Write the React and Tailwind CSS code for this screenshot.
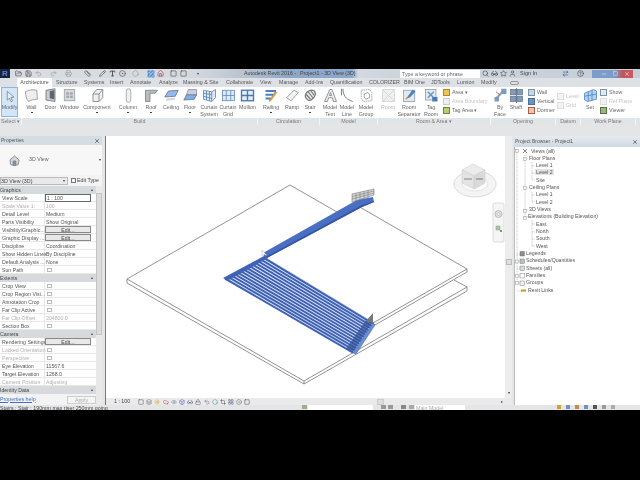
import { FolderOpen, Save, Undo2, Redo2, Printer, Ruler, Pencil, Type, CircleDot, Hexagon, LayoutGrid, Home, Square, Layers, Sun, Cloud, Eye, Glasses, Lock, Crop, Box, Search, Star, User, HelpCircle, X, ArrowRightLeft, Minus } from "lucide-react";

const tabs = [
  ["Structure", "w-[28px]"], ["Systems", "w-[26px]"], ["Insert", "w-[20px]"], ["Annotate", "w-[29px]"], ["Analyze", "w-[24px]"],
  ["Massing & Site", "w-[43px]"], ["Collaborate", "w-[34px]"], ["View", "w-[19px]"], ["Manage", "w-[26px]"], ["Add-Ins", "w-[25px]"],
  ["Quantification", "w-[39px]"], ["COLORIZER", "w-[35px]"], ["BIM One", "w-[27px]"], ["JDTools", "w-[26px]"], ["Lumion", "w-[24px]"], ["Modify", "w-[29px]"],
];

const Ic = ({ children }) => <svg viewBox="0 0 20 20" className="h-[15px] w-[15px]">{children}</svg>;

const icons = {
  modify: <path d="M7 3 L7 15 L10 12 L12 17 L14 16 L12 11 L16 11 Z" fill="#e8eef6" stroke="#6f7c8c" />,
  wall: <path d="M2 5 C7 2 12 2 17 3 L18 15 C13 15 9 16 6 18 C3 14 2 10 2 5Z" fill="#eeeeee" stroke="#888" />,
  door: <g><path d="M4 3 L16 1 L16 18 L4 16Z" fill="#c9ccd0" stroke="#666" /><path d="M9 4 L15 3 L15 15 L9 14Z" fill="#5c6775" /></g>,
  window: <g><rect x="3" y="2" width="14" height="15" fill="#d6d9dd" stroke="#999" /><path d="M5 5H15V14H5Z M10 5V14 M5 9.5H15" fill="#a0a9b4" stroke="#dfe3e8" /></g>,
  component: <path d="M4 8 L9 2 L17 2 L17 13 L12 18 L4 18Z M4 8 L12 8 L12 18 M12 8 L17 2" fill="#f0f0f0" stroke="#777" />,
  column: <rect x="7" y="1" width="6" height="18" rx="3" fill="#f0f0f0" stroke="#999" />,
  roof: <path d="M2 3 L18 3 L15 7 L8 7 L8 18 L2 18Z" fill="#b8bcc0" stroke="#777" />,
  ceiling: <g><path d="M6 4 L19 3 L15 11 L1 12Z" fill="#8fbcea" stroke="#668" /><path d="M3 14 L15 13 L14 16 L2 17Z" fill="#d2d6da" /></g>,
  floor: <g><path d="M7 2 H18 V10 L4 11Z" fill="#c9d0d8" stroke="#889" /><path d="M5 9 L18 9 L15 15 L1 16Z" fill="#7db0e6" stroke="#668" /></g>,
  system: <g fill="none" stroke="#4f7bb2"><path d="M2 3 L13 5 L18 2 V13 L13 18 L2 15Z" fill="#dfeaf6" /><path d="M13 5 V18 M6 4 V16 M10 4.5 V17 M2 7 L13 9 M2 11 L13 14" /></g>,
  grid: <g fill="#dde9f5" stroke="#5a84b8"><rect x="2" y="3" width="16" height="14" /><path d="M7 3V17 M13 3V17 M2 10H18" /></g>,
  mullion: <g fill="#e4ecf5" stroke="#4a78ad" strokeWidth="1.8"><rect x="2" y="3" width="16" height="14" /><path d="M10 3V17 M2 10H18" /></g>,
  railing: <g><path d="M2 4H16 M2 9H13 M2 14H9" stroke="#4a7fc4" strokeWidth="2.5" /><path d="M17 6 L9 17 L7 18 L7.5 15.5 L15 5Z" fill="#e0a526" stroke="#8a6414" strokeWidth=".5" /></g>,
  ramp: <path d="M2 13 L12 3 L18 6 L8 17Z" fill="#f2f2f2" stroke="#888" />,
  stair: <g fill="none" stroke="#777" strokeWidth="1.6"><path d="M3 11 C3 5 11 1 15 4 C18 7 16 12 12 15 C9 18 5 17 3 11Z" fill="#eee" /><path d="M7 5 L13 13 M10 3 L15 10 M4 8 L10 15" /></g>,
  mtext: <path d="M2 18 L9 2 L12 2 L18 18 L14 18 L12.5 13 L7.5 13 L6 18Z M8.5 10 L11.5 10 L10 6Z" fill="#ecedef" stroke="#777" />,
  mline: <path d="M4 1 C4 9 7 15 17 18 M2 1 V10" fill="none" stroke="#777" strokeWidth="1.2" />,
  mgroup: <g fill="none" stroke="#888"><path d="M3 3 L14 2 L17 6 L17 17 L6 18 L3 14Z" strokeDasharray="2 1" /><path d="M7 8 L12 6 L14 9 L14 13 L9 15 L7 12Z" /></g>,
  room: <g stroke="#d0d0d0" fill="#f0f0f0"><rect x="2" y="2" width="16" height="16" /><path d="M2 2 L18 18 M18 2 L2 18" /></g>,
  sep: <g stroke="#8895a2" fill="#e3e9ef"><rect x="2" y="3" width="15" height="15" /><path d="M5 15 L16 4" stroke="#d88f20" strokeWidth="2" /><path d="M14 2 L18 5 L10 13 L8 13 L8 11Z" fill="#4a86cf" stroke="none" /></g>,
  tag: <g stroke="#8895a2" fill="#e3e9ef"><rect x="2" y="2" width="14" height="14" /><path d="M5 5 L13 13 M13 5 L5 13" stroke="#6a97cb" strokeWidth="2" /><rect x="11" y="12" width="7" height="6" fill="#4a78b6" stroke="none" /></g>,
  face: <g><path d="M3 15 L15 3" stroke="#98a4b2" strokeWidth="3" /><rect x="11" y="1" width="7" height="7" fill="#7c9cc4" /><rect x="2" y="12" width="6" height="6" fill="#7c9cc4" /><path d="M4 5 L9 9" stroke="#c34" strokeWidth="1" /></g>,
  shaft: <g fill="#7c9cc4" stroke="#667788"><rect x="2" y="2" width="7" height="7" /><rect x="11" y="2" width="7" height="7" /><rect x="2" y="11" width="7" height="7" /><rect x="11" y="11" width="7" height="7" /><path d="M10 0V20" stroke="#555" /></g>,
  set: <g fill="#b4d3f2" stroke="#4a7fc4"><path d="M2 7 L14 2 L18 4 L18 15 L6 18 L2 16Z" /><path d="M7 5 V18 M12 3 V16.5 M2 11 L18 8" fill="none" /></g>,
};

const panels = [
  {
    w: "w-[236px]", label: "Build",
    tools: [
      ["Wall", "wall", "w-[19px]", 1], ["Door", "door", "w-[19px]"], ["Window", "window", "w-[19px]"], ["Component", "component", "w-[36px]", 1],
      ["Column", "column", "w-[26px]", 1], ["Roof", "roof", "w-[20px]", 1], ["Ceiling", "ceiling", "w-[20px]"], ["Floor", "floor", "w-[18px]", 1],
      ["Curtain System", "system", "w-[20px]"], ["Curtain Grid", "grid", "w-[18px]"], ["Mullion", "mullion", "w-[21px]"],
    ],
  },
  { w: "w-[62px]", label: "Circulation", tools: [["Railing", "railing", "w-[26px]", 1], ["Ramp", "ramp", "w-[16px]"], ["Stair", "stair", "w-[20px]", 1]] },
  { w: "w-[58px]", label: "Model", tools: [["Model Text", "mtext", "w-[20px]"], ["Model Line", "mline", "w-[14px]"], ["Model Group", "mgroup", "w-[24px]"]] },
];

const Tool = ({ label, icon, w, dot, dim }) => (
  <div className={`flex shrink-0 flex-col items-center ${w}`}>
    <div className="flex h-[16px] items-center"><Ic>{icons[icon]}</Ic></div>
    <div className={`mt-[1px] text-center text-[5.3px] leading-[7px] ${dim ? "text-[#b5b5b5]" : "text-[#666]"}`}>
      {label.split(" ").map((part) => <div key={part}>{part}</div>)}
    </div>
    {dot ? <div className="mt-[1px] h-[1px] w-[2px] bg-[#444]" /> : null}
  </div>
);

const Mini = ({ color, text, dim }) => (
  <div className={`flex h-[9px] items-center gap-[2px] text-[5.3px] ${dim ? "text-[#c4c4c4]" : "text-[#666]"}`}>
    <span className={`h-[7px] w-[7px] shrink-0 border ${color}`} />
    <span className="whitespace-nowrap">{text}</span>
  </div>
);

const Ribbon = () => (
  <div className="flex h-[38px] shrink-0 flex-col">
    <div className="flex h-[31px] bg-white">
      <div className="flex w-[22px] shrink-0 pl-[1px]">
        <div className="flex h-[30px] w-[17px] flex-col items-center border border-[#8db6e2] bg-[#d3e6f7]">
          <div className="flex h-[16px] items-center"><Ic>{icons.modify}</Ic></div>
          <span className="text-[5.3px] leading-[7px] text-[#5a6a7a]">Modify</span>
        </div>
      </div>
      {panels.map((p) => (
        <div key={p.label} className={`flex shrink-0 ${p.w}`}>
          {p.tools.map(([label, icon, w, dot]) => <Tool key={label} label={label} icon={icon} w={w} dot={dot} />)}
        </div>
      ))}
      <div className="flex w-[113px] shrink-0">
        <Tool label="Room" icon="room" w="w-[20px]" dim />
        <Tool label="Room Separator" icon="sep" w="w-[22px]" />
        <Tool label="Tag Room" icon="tag" w="w-[22px]" />
        <div className="flex w-[49px] flex-col pl-[1px] pt-[1px]">
          <Mini color="border-[#b28a1c] bg-[#eec44f]" text="Area ▾" />
          <Mini color="border-[#ccc] bg-[#eee]" text="Area  Boundary" dim />
          <Mini color="border-[#5b8a3a] bg-[#b5cf6a]" text="Tag  Area  ▾" />
        </div>
      </div>
      <div className="flex w-[65px] shrink-0">
        <Tool label="By Face" icon="face" w="w-[18px]" />
        <Tool label="Shaft" icon="shaft" w="w-[14px]" />
        <div className="flex w-[33px] flex-col pl-[5px] pt-[1px]">
          <Mini color="border-[#7c93ad] bg-[#c7d6e6]" text="Wall" />
          <Mini color="border-[#46709e] bg-[#6d93bd]" text="Vertical" />
          <Mini color="border-[#b65c3c] bg-[#e9c7b5]" text="Dormer" />
        </div>
      </div>
      <div className="flex w-[25px] shrink-0 flex-col pl-[1px] pt-[5px]">
        <Mini color="border-[#ddd] bg-[#f3f3f3]" text="Level" dim />
        <Mini color="border-[#ddd] bg-[#f3f3f3]" text="Grid" dim />
      </div>
      <div className="flex w-[55px] shrink-0">
        <Tool label="Set" icon="set" w="w-[18px]" />
        <div className="flex flex-col pl-[1px] pt-[1px]">
          <Mini color="border-[#7c93ad] bg-[#dfe7ef]" text="Show" />
          <Mini color="border-[#ddd] bg-[#f1f1f1]" text="Ref  Plane" dim />
          <Mini color="border-[#55703e] bg-[#9db580]" text="Viewer" />
        </div>
      </div>
    </div>
    <div className="flex h-[7px] bg-[#e2e5e8] text-[5.3px] leading-[7px] text-[#777]">
      {[
        ["w-[22px]", "Select ▾"], ["w-[236px]", "Build"], ["w-[62px]", "Circulation"], ["w-[58px]", "Model"],
        ["w-[113px]", "Room & Area ▾"], ["w-[65px]", "Opening"], ["w-[25px]", "Datum"], ["w-[55px]", "Work Plane"],
      ].map(([w, label]) => (
        <div key={label} className={`shrink-0 border-r border-[#f4f5f6] text-center ${w}`}>{label}</div>
      ))}
    </div>
  </div>
);

const TitleBar = () => (
  <div className="flex h-[9px] shrink-0 items-center bg-[linear-gradient(90deg,#d9dde2_0%,#d4d9df_30%,#b9c4cf_38%,#8da7c6_45%,#8aa7cc_55%,#d3d9df_56%,#ccd4dc_62%,#c6ced8_100%)] text-[#444]">
    <div className="flex h-[9px] w-[10px] shrink-0 items-center justify-center bg-[#16233f] text-[8px] font-bold leading-none text-[#5d86c7]">R</div>
    <div className="ml-[5px] flex w-[229px] shrink-0 items-center">
      <FolderOpen size={7} />
      <Save size={7} className="ml-[3px]" />
      <Undo2 size={7} className="ml-[3px] text-[#999]" />
      <Redo2 size={7} className="ml-[8px] text-[#999]" />
      <Printer size={7} className="ml-[8px] text-[#999]" />
      <Ruler size={7} className="ml-[12px]" />
      <Pencil size={7} className="ml-[8px]" />
      <Type size={7} strokeWidth={3} className="ml-[3px]" />
      <CircleDot size={7} className="ml-[3px]" />
      <Hexagon size={7} className="ml-[6px] text-[#999]" />
      <LayoutGrid size={8} className="ml-[8px] bg-[#bcd6f2] text-[#2f69b5]" />
      <Home size={7} className="ml-[2px] text-[#a33]" />
      <Square size={7} className="ml-[6px]" />
      <Square size={7} className="ml-[3px]" />
      <span className="ml-[10px] text-[4px]">▾</span>
    </div>
    <span className="w-[56px] shrink-0 whitespace-nowrap text-[5.3px]">Autodesk Revit 2016 -</span>
    <span className="w-[100px] shrink-0 whitespace-nowrap text-[5.3px]">Project1 - 3D View (3D)</span>
    <div className="h-[8px] w-[80px] shrink-0 bg-white pl-[2px] text-[5.3px] leading-[8px] text-[#666]">Type a keyword or phrase</div>
    <div className="ml-[2px] flex w-[38px] shrink-0 items-center gap-[2px]">
      <Search size={7} />
      <Glasses size={7} />
      <Star size={7} />
      <User size={7} />
    </div>
    <span className="w-[42px] shrink-0 text-[5.5px]">Sign In</span>
    <ArrowRightLeft size={7} className="shrink-0 text-[#24579e]" />
    <HelpCircle size={7} className="ml-[8px] shrink-0" />
    <div className="ml-[8px] flex h-[8px] w-[41px] shrink-0 items-center justify-end bg-[linear-gradient(90deg,#7c9ccb_0%,#7c9ccb_55%,#c0555c_75%,#c95a60_100%)] pr-[3px] text-white">
      <Minus size={6} className="mr-[6px]" />
      <Square size={5} className="mr-[6px]" />
      <X size={6} />
    </div>
  </div>
);

const Tabs = () => (
  <div className="flex h-[9px] shrink-0 items-end bg-[#dde0e4] pl-[17px] text-[5.3px] leading-[9px] text-[#555]">
    <div className="mr-[4px] h-[9px] w-[35px] shrink-0 bg-white text-center">Architecture</div>
    {tabs.map(([label, w]) => <div key={label} className={`h-[9px] shrink-0 whitespace-nowrap ${w}`}>{label}</div>)}
    <div className="h-[4px] w-[9px] self-center rounded-[2px] border border-[#999]" />
  </div>
);

const Head = ({ children }) => (
  <div className="flex h-[8px] items-center justify-between bg-[#d7dadd] pr-[3px] text-[5.2px] leading-[8px] text-[#444]">
    <span>{children}</span>
    <span className="text-[4px]">▴</span>
  </div>
);

const Row = ({ label, value, dim, check, edit, box }) => (
  <div className={`flex h-[8px] border-b border-[#e7e7e7] text-[5.2px] leading-[8px] ${dim ? "text-[#b0b0b0]" : "text-[#555]"}`}>
    <div className="w-[45px] shrink-0 whitespace-nowrap border-r border-[#e7e7e7] pl-[2px]">{label}</div>
    {check ? <div className="ml-[2px] mt-[1.5px] h-[4.5px] w-[4.5px] border border-[#bbb] bg-white" /> : null}
    {edit ? <div className="h-[7px] w-[46px] border border-[#888] bg-[#e8e8e8] text-center leading-[6px] text-[#444]">Edit...</div> : null}
    {box ? <div className="h-[8px] w-[46px] border border-[#666] bg-white pl-[1px] leading-[6px]">{value}</div> : null}
    {value && !box ? <div className="whitespace-nowrap pl-[1px]">{value}</div> : null}
  </div>
);

const Properties = () => (
  <div className="flex w-[102px] shrink-0 flex-col bg-[#f3f3f3]">
    <div className="flex h-[9px] shrink-0 items-center justify-between bg-[#d4dce4] pl-[1px] pr-[2px] text-[5px] text-[#555]">
      <span>Properties</span>
      <X size={6} strokeWidth={3} />
    </div>
    <div className="flex h-[30px] shrink-0 items-center bg-[#f7f7f7] pl-[8px] pr-[1px]">
      <svg viewBox="0 0 20 20" className="h-[13px] w-[13px]">
        <path d="M3 9 L10 3 L17 9 L16 16 L10 18 L4 16Z" fill="#d4d8dc" stroke="#666" />
        <path d="M8 18 V11 H12 V18" fill="#8b98a8" stroke="#666" />
      </svg>
      <span className="ml-[8px] flex-1 text-[5.3px] text-[#666]">3D View</span>
      <span className="text-[4px] text-[#333]">▾</span>
    </div>
    <div className="flex h-[11px] shrink-0 items-center text-[5.3px] text-[#444]">
      <div className="flex h-[8px] w-[68px] items-center justify-between border border-[#bbb] bg-[#e9e9e9] pr-[2px] leading-[6px]">
        <span>3D View (3D)</span>
        <span className="text-[4px]">▾</span>
      </div>
      <span className="ml-[3px] h-[5px] w-[5px] border border-[#777]" />
      <span className="ml-[1px] whitespace-nowrap">Edit Type</span>
    </div>
    <div className="flex flex-1">
      <div className="w-[96px] shrink-0 bg-white">
        <Head>Graphics</Head>
        <Row label="View Scale" value="1 : 100" box />
        <Row label="Scale Value   1:" value="100" dim />
        <Row label="Detail Level" value="Medium" />
        <Row label="Parts Visibility" value="Show Original" />
        <Row label="Visibility/Graphic..." edit />
        <Row label="Graphic Display ..." edit />
        <Row label="Discipline" value="Coordination" />
        <Row label="Show Hidden Lines" value="By Discipline" />
        <Row label="Default Analysis ..." value="None" />
        <Row label="Sun Path" check />
        <Head>Extents</Head>
        <Row label="Crop View" check />
        <Row label="Crop Region Visi..." check />
        <Row label="Annotation Crop" check />
        <Row label="Far Clip Active" check />
        <Row label="Far Clip Offset" value="304800.0" dim />
        <Row label="Section Box" check />
        <Head>Camera</Head>
        <Row label="Rendering Settings" edit />
        <Row label="Locked Orientation" check dim />
        <Row label="Perspective" check dim />
        <Row label="Eye Elevation" value="11567.6" />
        <Row label="Target Elevation" value="1268.0" />
        <Row label="Camera Position" value="Adjusting" dim />
        <Head>Identity Data</Head>
        <div className="flex h-[11px] items-center justify-between bg-[#f3f3f3] text-[5.3px]">
          <span className="text-[#3a6fc4] underline">Properties help</span>
          <span className="h-[8px] w-[29px] border border-[#ccc] bg-[#f5f5f5] text-center leading-[6px] text-[#aaa]">Apply</span>
        </div>
      </div>
      <div className="flex w-[6px] shrink-0 flex-col bg-[#e9e9e9] pt-[7px]">
        <div className="h-[142px] border border-[#c4c4c4] bg-[#dcdcdc]" />
      </div>
    </div>
  </div>
);

function Treads() {
  const lines = [];
  const n = 14;
  for (let i = 0; i < n; i++) {
    const t = i / (n - 1);
    const x1 = 225 + t * 40;
    const y1 = 278 - t * 20;
    const x2 = 353 + t * 20;
    const y2 = 352 - t * 29;
    lines.push(
      <g key={i}>
        <line x1={x1} y1={y1 + 0.5} x2={x2} y2={y2 + 0.5} stroke="#3d60b4" strokeWidth="2.1" />
        <line x1={x1 + 3} y1={y1 + 0.7} x2={x2 - 0.5} y2={y2 - 1} stroke="#c3d1ef" strokeWidth="0.6" />
      </g>
    );
  }
  return <g>{lines}</g>;
}

const Model = () => (
  <svg viewBox="106 136 399 262" className="h-full w-full">
    <g fill="none" stroke="#777" strokeWidth="0.8">
      <path d="M290 185 L127 279 V283 L304 384 V381 L127 279" />
      <path d="M290 185 L337 212" />
      <path d="M358 206 L467 269 V272 L375 325 M467 269 L373 323" />
      <path d="M454 280 L467 287 V291 L304 384 M467 287 L304 381" />
    </g>
    <path d="M263 253 L357 200 L373 197 L374 202 L362 207 L265 259Z" fill="#4a6ec2" />
    <path d="M265 259 L362 207 L374 202 L374 201 L361 205.5 L264.500 257.500Z" fill="#3456a8" />
    <g stroke="#777" strokeWidth="0.6" fill="#d8d8d8">
      <path d="M352 194 L374 189 V195 L352 202Z" />
      <path d="M356 193 V201 M360 192 V200 M364 191 V199 M368 190 V198 M352 196.5 L374 191 M352 199 L374 193" fill="none" />
    </g>
    <Treads />
    <path d="M223 278 L264 256 L268 258 L228 280.500Z" fill="#3f62b6" />
    <path d="M353 353 L373 323 L375 325 L356 354Z" fill="#6c8ed4" stroke="#3558a8" strokeWidth="0.5" />
    <path d="M346 349 L366 320 L372 323 L353 352Z" fill="#2f4f96" opacity="0.7" />
    <path d="M366 321 L373 313 L373 323Z" fill="#777" />
    <path d="M262 250 L262 256 L264 254.500 L267 255.500 Z" fill="#fff" stroke="#999" strokeWidth="0.4" />
    <g>
      <ellipse cx="475" cy="184" rx="21" ry="13" fill="#f4f4f4" stroke="#dcdcdc" />
      <ellipse cx="475" cy="184" rx="13" ry="7" fill="#fbfbfb" stroke="#e6e6e6" />
      <path d="M462 170 L473 164 L485 170 L474 176Z" fill="#ececec" stroke="#c8c8c8" strokeWidth="0.5" />
      <path d="M462 170 L474 176 V189 L462 183Z" fill="#e4e4e4" stroke="#c8c8c8" strokeWidth="0.5" />
      <path d="M474 176 L485 170 V183 L474 189Z" fill="#dadada" stroke="#c8c8c8" strokeWidth="0.5" />
      <rect x="464" y="178" width="8" height="2" fill="#b4b4b4" />
      <rect x="476" y="178" width="7" height="2" fill="#aaaaaa" />
    </g>
    <g>
      <rect x="493" y="203" width="11" height="39" rx="1.5" fill="#f5f5f5" stroke="#d0d0d0" strokeWidth="0.7" />
      <circle cx="498.5" cy="214" r="3.5" fill="#e2e2e2" stroke="#aaa" strokeWidth="0.7" />
      <circle cx="498.5" cy="214" r="1.5" fill="#f5f5f5" stroke="#aaa" strokeWidth="0.5" />
      <rect x="496" y="226" width="4" height="4" fill="#a9c8a9" stroke="#7b9a7b" strokeWidth="0.5" />
      <circle cx="501" cy="231" r="1" fill="#666" />
    </g>
  </svg>
);

const viewIcons = [
  [Square, "text-[#555]"], [Layers, "text-[#666]"], [Sun, "text-[#d8a21c]"], [Cloud, "text-[#b44]"], [Eye, "text-[#789]"], [Box, "text-[#46a]"],
  [Glasses, "text-[#568]"], [Lock, "text-[#666]"], [Undo2, "text-[#667]"], [Hexagon, "text-[#48a]"], [Crop, "text-[#556]"], [LayoutGrid, "text-[#568]"],
  [CircleDot, "text-[#666]"], [Square, "text-[#444]"],
];

const Canvas = () => (
  <div className="flex w-[407px] shrink-0 flex-col border-l border-[#777]">
    <div className="flex flex-1 overflow-hidden">
      <div className="w-[399px] shrink-0 bg-white"><Model /></div>
      <div className="flex w-[7px] shrink-0 flex-col items-center justify-end bg-[#ededed] pb-[2px] text-[4px] text-[#333]">
        <div className="mb-[125px] h-[6px] w-[6px] border border-[#bbb] bg-[#e0e0e0]" />
        ▾
      </div>
    </div>
    <div className="flex h-[7px] shrink-0 items-center bg-[#eaeaea] pl-[8px] text-[5.3px] text-[#444]">
      <span className="w-[24px] shrink-0">1 : 100</span>
      <div className="flex w-[127px] shrink-0 gap-[2.2px]">
        {viewIcons.map(([Icon, color], i) => <Icon key={i} size={6} className={color} />)}
      </div>
      <div className="ml-[112px] h-[6px] w-[7px] border border-[#ccc] bg-[#ddd]" />
      <span className="ml-[117px] text-[4px]">▸</span>
    </div>
  </div>
);

const tree = [
  ["Views (all)", "pl-[15px]"], ["Floor Plans", "pl-[13px]"], ["Level 1", "pl-[20px]"], ["Level 2", "pl-[20px]", true], ["Site", "pl-[20px]"],
  ["Ceiling Plans", "pl-[13px]"], ["Level 1", "pl-[20px]"], ["Level 2", "pl-[20px]"], ["3D Views", "pl-[13px]"], ["Elevations (Building Elevation)", "pl-[12px]"],
  ["East", "pl-[20px]"], ["North", "pl-[20px]"], ["South", "pl-[20px]"], ["West", "pl-[20px]"], ["Legends", "pl-[10px]"],
  ["Schedules/Quantities", "pl-[10px]"], ["Sheets (all)", "pl-[10px]"], ["Families", "pl-[10px]"], ["Groups", "pl-[10px]"], ["Revit Links", "pl-[12px]"],
];

const Browser = () => (
  <div className="ml-[2px] flex w-[126px] shrink-0 flex-col bg-white">
    <div className="flex h-[11px] shrink-0 items-center justify-between bg-[linear-gradient(180deg,#e8ebef_0%,#ccd8e4_100%)] pl-[1px] pr-[2px] text-[5px] text-[#555]">
      <span>Project Browser - Project1</span>
      <X size={6} strokeWidth={3} />
    </div>
    <div className="relative flex-1 border-l border-[#bbb] pt-[0.5px]">
      {tree.map(([label, pad, selected], i) => (
        <div key={i} className={`h-[7.33px] whitespace-nowrap text-[5.2px] leading-[7.33px] text-[#555] ${pad}`}>
          <span className={selected ? "bg-[#e4e4e4] px-[1px]" : "px-[1px]"}>{label}</span>
        </div>
      ))}
      <svg className="absolute left-0 top-0 h-[150px] w-[24px]" viewBox="0 0 24 150">
        <g fill="none" stroke="#aaa" strokeWidth="0.6" strokeDasharray="1 .6">
          <path d="M2 4V137" />
          <path d="M10 8V71 M10 12H13 M10 41H13 M10 63H13 M10 70H13 M17 15V33 M17 19H20 M17 26H20 M17 33H20 M17 45V55 M17 48H20 M17 55H20 M17 73V100 M17 77H20 M17 85H20 M17 92H20 M17 99H20" />
          <path d="M2 107H6 M2 114H6 M2 122H6 M2 129H6 M2 136H6 M2 144H11" />
        </g>
        <g fill="#f4f4f4" stroke="#999" strokeWidth="0.5">
          <rect x="0.5" y="2.5" width="3" height="3" />
          <rect x="8.5" y="10.5" width="3" height="3" />
          <rect x="8.5" y="39.5" width="3" height="3" />
          <rect x="8.5" y="62.5" width="3" height="3" />
          <rect x="8.5" y="69.5" width="3" height="3" />
          <rect x="0.5" y="113" width="3" height="3" />
          <rect x="0.5" y="127.5" width="3" height="3" />
          <rect x="0.5" y="134.5" width="3" height="3" />
        </g>
        <path d="M8 2 L12 6 M12 2 L8 6" stroke="#666" strokeWidth="0.8" />
        <g fill="#8a8f96" stroke="#666" strokeWidth="0.4">
          <rect x="5" y="104.5" width="4.5" height="4.5" />
          <rect x="5" y="112" width="4.5" height="4.5" fill="#b9bec4" />
          <rect x="5" y="119" width="4.5" height="4.5" fill="#d8dadc" />
          <rect x="5" y="126.5" width="4.5" height="4.5" fill="#fff" />
          <rect x="5" y="134" width="4.5" height="4.5" fill="#eee" />
        </g>
        <rect x="6" y="142.5" width="5" height="2" fill="#c99a18" />
      </svg>
    </div>
  </div>
);

const StatusBar = () => (
  <div className="flex h-[5px] shrink-0 items-start overflow-hidden bg-[#e3e5e7] text-[5.3px] leading-[6px] text-[#444]">
    <span className="w-[302px] shrink-0 whitespace-nowrap">Stairs : Stair : 190mm max riser 250mm going</span>
    <span className="h-[4px] w-[5px] shrink-0 bg-[#9ab08a]" />
    <div className="ml-[1px] h-[5px] w-[65px] shrink-0 bg-white" />
    <span className="ml-[8px] h-[4px] w-[5px] shrink-0 bg-[#999]" />
    <span className="ml-[2px] h-[4px] w-[5px] shrink-0 bg-[#999]" />
    <span className="ml-[8px] h-[4px] w-[5px] shrink-0 bg-[#888]" />
    <span className="ml-[3px] h-[4px] w-[5px] shrink-0 bg-[#aaa]" />
    <span className="ml-[1px] h-[5px] w-[50px] shrink-0 bg-white pl-[1px] text-[#aaa]">Main Model</span>
    <div className="ml-[92px] flex gap-[5px]">
      <span className="h-[4px] w-[4px] bg-[#d8a21c]" />
      <span className="h-[4px] w-[4px] bg-[#6d93bd]" />
      <span className="h-[4px] w-[4px] bg-[#c88a4a]" />
      <span className="h-[4px] w-[4px] bg-[#6d93bd]" />
      <span className="h-[4px] w-[4px] bg-[#555]" />
      <span className="h-[4px] w-[4px] bg-[#999]" />
      <span className="h-[4px] w-[4px] bg-[#aaa]" />
    </div>
  </div>
);

export default function App() {
  return (
    <div className="flex h-[480px] w-[640px] flex-col overflow-hidden bg-black font-['Liberation_Sans',Arial,sans-serif]">
      <div className="h-[69px] shrink-0" />
      <div className="flex h-[341px] shrink-0 flex-col overflow-hidden bg-[#e3e5e7] blur-[0.4px]">
        <TitleBar />
        <Tabs />
        <Ribbon />
        <div className="h-[11px] shrink-0 bg-[#e3e5e7]" />
        <div className="flex h-[269px] shrink-0">
          <Properties />
          <div className="w-[3px] shrink-0" />
          <Canvas />
          <Browser />
        </div>
        <StatusBar />
      </div>
    </div>
  );
}
